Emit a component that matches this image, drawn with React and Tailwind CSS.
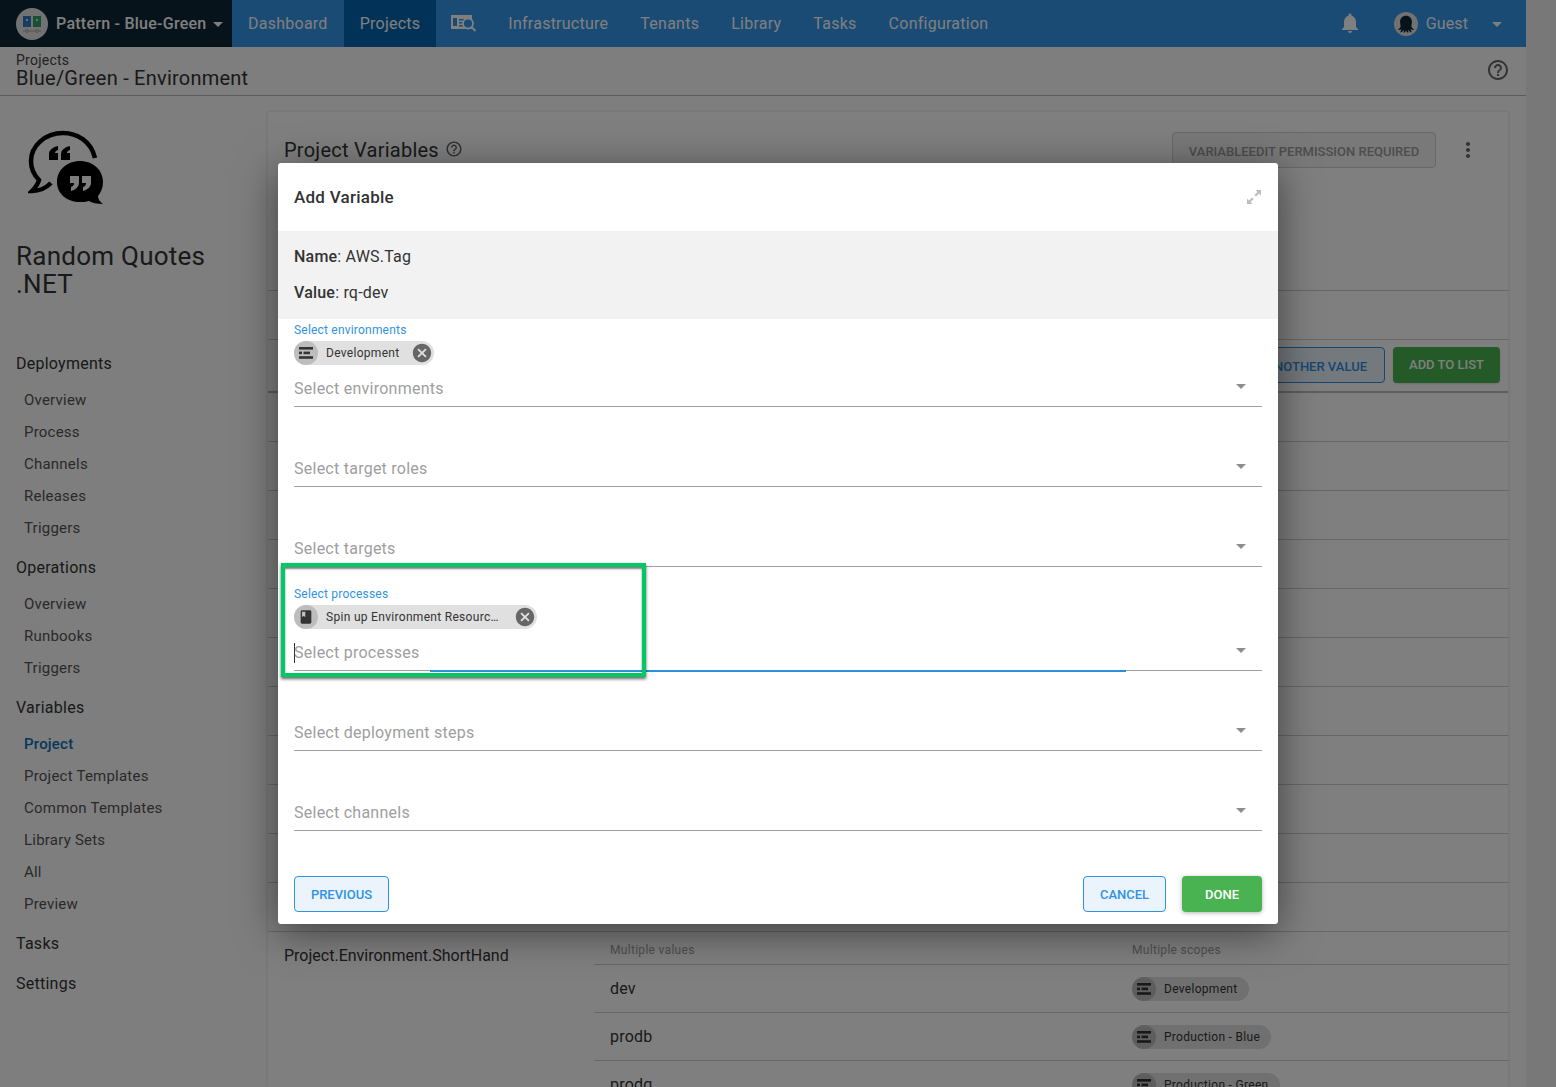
import React from "react";
import { MdArrowDropDown, MdNotifications, MdHelpOutline, MdMoreVert, MdCancel, MdBook } from "react-icons/md";

const F = { fontFamily: "Roboto, 'Liberation Sans', sans-serif" };

function EnvIcon({ className = "w-[14px] h-[12px] text-[#333]" }) {
  return (
    <svg viewBox="0 0 14 12" className={className} fill="currentColor">
      <rect x="0" y="0" width="14" height="2.6" />
      <rect x="0" y="4.6" width="3" height="2.6" />
      <rect x="4.5" y="4.6" width="6.5" height="2.6" />
      <rect x="0" y="9.2" width="14" height="2.6" />
    </svg>
  );
}

function Avatar({ children, bg = "bg-[#bdbdbd]" }) {
  return <span className={`w-6 h-6 rounded-full ${bg} flex items-center justify-center shrink-0`}>{children}</span>;
}

function Field({ h, label, chip, chipTextClass = "", placeholder, chipIcon, focus }) {
  return (
    <div className={`${h} px-4 flex flex-col justify-end`}>
      {label && <div className="text-xs leading-[14px] text-[#2f93e0] tracking-[0.2px]">{label}</div>}
      {chip && (
        <div className="mt-1 self-start h-6 pr-px rounded-full bg-[#e0e0e0] flex items-center">
          <Avatar>{chipIcon}</Avatar>
          <span className={`ml-2 text-xs tracking-[0.3px] text-[#333] whitespace-nowrap ${chipTextClass}`}>{chip}</span>
          <MdCancel className="ml-[11px] w-[22px] h-[22px] text-[#666]" />
        </div>
      )}
      <div className="relative h-9 mt-[6px] border-b border-[#9e9e9e] flex items-center justify-between">
        {focus && <span className="absolute left-0 top-2 w-px h-5 bg-[#333]" />}
        <span className="flex-1 text-base tracking-[0.25px] text-[#9e9e9e]">{placeholder}</span>
        <MdArrowDropDown className="w-6 h-6 text-[#8e8e8e] mr-[9px] -mt-1.5" />
        {focus && <span className="absolute left-[136px] top-[35px] w-[696px] h-0.5 bg-[#2f8fdf]" />}
      </div>
    </div>
  );
}

const NavLink = ({ children, active }) => (
  <div className={`h-full px-4 flex items-center text-base tracking-[0.25px] ${active ? "bg-[#0565b1]" : ""}`}>{children}</div>
);

const SideHead = ({ children, className = "" }) => (
  <div className={`h-10 flex items-center pl-4 text-base text-[#333] tracking-[0.25px] ${className}`}>{children}</div>
);
const SideItem = ({ children, active }) => (
  <div className={`h-8 flex items-center pl-6 text-[15px] tracking-[0.22px] ${active ? "text-[#0f6cb8] font-medium" : "text-[#555]"}`}>{children}</div>
);

function ScopeChip({ label }) {
  return (
    <div className="inline-flex h-6 rounded-full bg-[#e0e0e0] items-center pr-[11px]">
      <Avatar><EnvIcon /></Avatar>
      <span className="ml-2 text-xs tracking-[0.3px] text-[#333]">{label}</span>
    </div>
  );
}

function ValueRow({ value, scope }) {
  return (
    <div className="h-12 border-b border-[#cfcfcf] flex items-center">
      <div className="w-[538px] pl-4 text-base tracking-[0.2px] text-[#333]">{value}</div>
      <ScopeChip label={scope} />
    </div>
  );
}

function Logo() {
  return (
    <svg viewBox="0 0 78 76" className="w-[78px] h-[76px] text-black" fill="none">
      <path d="M67 28C63 11 49 3 35 3 17 3 3 16 3 31c0 8 3 14 8 19-1 4-4 8-7 11 7 0 14-3 19-8" stroke="currentColor" strokeWidth="4.5" />
      <path d="M21 30v-6c0-4 4-7 9-8v4c-2 .5-3 2-3 3h3v7zM33 30v-6c0-4 4-7 9-8v4c-2 .5-3 2-3 3h3v7z" fill="currentColor" />
      <path d="M29 52c0-12 10-21 23-21s23 9 23 21c0 6-2 10-5 14 0 3 2 6 5 8-6 0-11-1-14-3-3 1-6 1-9 1-13 0-23-8-23-20z" fill="currentColor" />
      <path d="M42 46h9v7c0 4-4 7-8 8v-4c2-.5 3-2 3-4h-4zM54 46h9v7c0 4-4 7-8 8v-4c2-.5 3-2 3-4h-4z" className="fill-[#fcfcfc]" />
    </svg>
  );
}

export default function App() {
  const rows = [0, 1, 2, 3, 4, 5, 6, 7, 8, 9, 10];
  return (
    <div className="relative w-[1556px] h-[1087px] overflow-hidden bg-[#f0f0f0]" style={F}>
      <div className="w-[1526px] h-full bg-[#fcfcfc] flex flex-col">
        {/* top nav */}
        <header className="h-[47px] bg-[#3396ea] flex items-center text-white shrink-0">
          <div className="w-[232px] h-full bg-[#0e2637] flex items-center pl-4 shrink-0">
            <span className="w-8 h-8 rounded-full bg-[#e4e4e4] flex items-center justify-center">
              <svg viewBox="0 0 24 24" className="w-6 h-6">
                <rect x="3" y="4" width="8" height="11" fill="#2e7dc4" />
                <rect x="13" y="4" width="8" height="11" fill="#2fa068" />
                <rect x="6" y="7" width="2" height="2" fill="#cfe3f5" />
                <rect x="16" y="7" width="2" height="2" fill="#cfe9dc" />
                <path d="M3 19h18" stroke="#aaa" strokeWidth="1" />
                <circle cx="7" cy="19" r="1.4" fill="#e4e4e4" stroke="#aaa" />
                <circle cx="17" cy="19" r="1.4" fill="#e4e4e4" stroke="#aaa" />
              </svg>
            </span>
            <span className="ml-2 text-base font-medium tracking-[0.25px] whitespace-nowrap">Pattern - Blue-Green</span>
            <MdArrowDropDown className="w-6 h-6" />
          </div>
          <NavLink>Dashboard</NavLink>
          <NavLink active>Projects</NavLink>
          <div className="w-[56px] h-full flex items-center justify-center">
            <svg viewBox="0 0 26 17" className="w-[26px] h-[17px]" fill="white">
              <rect x="0" y="0" width="21" height="14" />
              <rect x="2" y="3" width="4" height="8" fill="#3396ea" />
              <path d="M8 4h5v1.400H8zM8 7h4v1.400H8zM8 10h4v1.400H8z" fill="#3396ea" />
              <circle cx="17" cy="8.500" r="5" fill="#3396ea" stroke="white" strokeWidth="1.800" />
              <path d="M20.500 12l4 4" stroke="white" strokeWidth="2" />
            </svg>
          </div>
          <NavLink>Infrastructure</NavLink>
          <NavLink>Tenants</NavLink>
          <NavLink>Library</NavLink>
          <NavLink>Tasks</NavLink>
          <NavLink>Configuration</NavLink>
          <div className="flex-1" />
          <MdNotifications className="w-6 h-6 -mt-0.5" />
          <span className="ml-[32px] w-6 h-6 rounded-full bg-[#e4e4e4] flex items-center justify-center">
            <svg viewBox="0 0 24 24" className="w-[22px] h-[22px] text-[#0e2637]" fill="currentColor">
              <path d="M12 3c-4 0-6.500 3-6.500 6.500 0 2.500.8 4 .5 5.500-.4 1.800-2 2.500-3 3 1.500.8 3 .3 4-.6-.2 1.600-.8 2.800-1.500 3.600 2 .2 3.200-1.200 3.800-2.800.3 1.300.4 2.300 0 3.300 1.800-.2 2.500-1.600 2.700-3 .2 1.400.9 2.800 2.700 3-.4-1-.3-2 0-3.300.6 1.600 1.800 3 3.800 2.800-.7-.8-1.300-2-1.500-3.600 1 .9 2.500 1.400 4 .6-1-.5-2.600-1.200-3-3-.3-1.500.5-3 .5-5.500C18.500 6 16 3 12 3z" />
            </svg>
          </span>
          <span className="ml-2 text-base tracking-[0.1px]">Guest</span>
          <MdArrowDropDown className="w-6 h-6 ml-[17px] mr-[17px]" />
        </header>

        {/* breadcrumb */}
        <div className="h-[49px] shrink-0 border-b border-[#b8b8b8] px-4 pt-[6px] flex justify-between">
          <div>
            <div className="text-sm leading-[14px] tracking-[0.25px] text-[#444]">Projects</div>
            <div className="text-xl leading-[22px] tracking-[0.23px] text-[#333]">Blue/Green - Environment</div>
          </div>
          <MdHelpOutline className="w-6 h-6 text-[#666] mt-[5px]" />
        </div>

        <div className="flex-1 flex min-h-0">
          {/* sidebar */}
          <aside className="w-[268px] shrink-0 flex flex-col">
            <div className="pl-7 pt-[34px]"><Logo /></div>
            <div className="pl-4 mt-[36px] text-[26px] leading-[28px] tracking-[0.25px] text-[#333]">Random Quotes<br />.NET</div>
            <SideHead className="mt-[46px]">Deployments</SideHead>
            <SideItem>Overview</SideItem>
            <SideItem>Process</SideItem>
            <SideItem>Channels</SideItem>
            <SideItem>Releases</SideItem>
            <SideItem>Triggers</SideItem>
            <SideHead className="mt-[4px]">Operations</SideHead>
            <SideItem>Overview</SideItem>
            <SideItem>Runbooks</SideItem>
            <SideItem>Triggers</SideItem>
            <SideHead className="mt-[4px]">Variables</SideHead>
            <SideItem active>Project</SideItem>
            <SideItem>Project Templates</SideItem>
            <SideItem>Common Templates</SideItem>
            <SideItem>Library Sets</SideItem>
            <SideItem>All</SideItem>
            <SideItem>Preview</SideItem>
            <SideHead className="mt-[4px]">Tasks</SideHead>
            <SideHead>Settings</SideHead>
          </aside>

          {/* card */}
          <main className="mt-4 w-[1240px] bg-white shadow-[0_0_3px_rgba(0,0,0,0.15)]">
            <div className="h-[179px] border-b border-[#cfcfcf] pl-4 pt-[20px] pr-[28px] flex items-start justify-between">
              <div className="flex items-center gap-1.5 mt-[6px]">
                <span className="text-xl leading-6 tracking-[0.25px] text-[#333]">Project Variables</span>
                <MdHelpOutline className="w-[18px] h-[18px] text-[#666] -mt-0.5" />
              </div>
              <div className="flex items-center gap-5">
                <div className="h-9 w-[264px] pt-1 rounded-sm border border-[#d0d0d0] bg-[#f2f2f2] flex items-center justify-center text-[13px] font-medium text-[#9a9a9a]">VARIABLEEDIT PERMISSION REQUIRED</div>
                <MdMoreVert className="w-6 h-6 text-[#666]" />
              </div>
            </div>
            <div className="h-[49px] border-b border-[#cfcfcf]" />
            <div className="h-[53px] border-b-2 border-[#bdbdbd] flex items-start justify-end pt-[7px] pr-2 gap-2">
              <div className="h-9 w-[120px] pt-1 rounded-sm border border-[#2f8fdf] bg-[#e8f3fc] flex items-center justify-end pr-[17px] text-[13px] font-medium text-[#2f8fdf] whitespace-nowrap">ANOTHER VALUE</div>
              <div className="h-9 w-[107px] rounded-sm bg-[#48b350] flex items-center justify-center text-[13px] font-medium text-white shadow-sm">ADD TO LIST</div>
            </div>
            {rows.map((i) => (
              <div key={i} className="h-[49px] border-b border-[#cfcfcf]" />
            ))}
            <div className="flex">
              <div className="w-[326px] pl-4 pt-[12px] text-base text-[#333]">Project.Environment.ShortHand</div>
              <div className="flex-1">
                <div className="h-[33px] pt-[3px] border-b border-[#cfcfcf] flex items-center text-xs tracking-[0.3px] text-[#9e9e9e]">
                  <div className="w-[538px] pl-4">Multiple values</div>
                  <div>Multiple scopes</div>
                </div>
                <ValueRow value="dev" scope="Development" />
                <ValueRow value="prodb" scope="Production - Blue" />
                <ValueRow value="prodg" scope="Production - Green" />
              </div>
            </div>
          </main>
        </div>
      </div>

      {/* dim overlay */}
      <div className="absolute inset-0 bg-black/50" />

      {/* modal */}
      <div className="absolute left-[278px] top-[163px] w-[1000px] h-[761px] bg-white rounded-[3px] shadow-[0_8px_40px_rgba(0,0,0,0.5)] flex flex-col">
        <div className="h-[68px] shrink-0 px-4 pt-0.5 flex items-center justify-between">
          <span className="text-[17px] font-medium tracking-[0.25px] text-[#333]">Add Variable</span>
          <svg viewBox="0 0 14 14" className="w-[14px] h-[14px] text-[#bdbdbd] -mt-0.5 mr-px" fill="currentColor">
            <path d="M14 0v5.500l-2-2-3 3-1.500-1.500 3-3-2-2zM0 14V8.500l2 2 3-3L6.500 9l-3 3 2 2z" />
          </svg>
        </div>
        <div className="h-[88px] shrink-0 bg-[#f2f2f2] px-4 pt-4 text-base leading-5 text-[#333] tracking-[0.2px]">
          <div><span className="font-medium">Name</span>: AWS.Tag</div>
          <div className="mt-4"><span className="font-medium">Value</span>: rq-dev</div>
        </div>
        <Field h="h-[88px]" label="Select environments" chip="Development" chipIcon={<EnvIcon />} placeholder="Select environments" />
        <Field h="h-[80px]" placeholder="Select target roles" />
        <Field h="h-[80px]" placeholder="Select targets" />
        <Field h="h-[104px]" label="Select processes" chip="Spin up Environment Resourc…" chipTextClass="w-[177px]" chipIcon={<MdBook className="w-4 h-4 text-[#333]" />} placeholder="Select processes" focus />
        <Field h="h-[80px]" placeholder="Select deployment steps" />
        <Field h="h-[80px]" placeholder="Select channels" />
        <div className="flex-1 px-4 pt-[45px] flex items-start">
          <div className="h-9 w-[95px] pt-0.5 rounded-sm border border-[#2f93e0] bg-[#ebf4fd] flex items-center justify-center text-[13px] font-medium text-[#2f93e0]">PREVIOUS</div>
          <div className="flex-1" />
          <div className="h-9 w-[83px] pt-0.5 rounded-sm border border-[#2f93e0] bg-[#ebf4fd] flex items-center justify-center text-[13px] font-medium text-[#2f93e0]">CANCEL</div>
          <div className="ml-4 h-9 w-20 pt-0.5 rounded-sm bg-[#48b350] flex items-center justify-center text-[13px] font-medium text-white shadow-[0_1px_4px_rgba(0,0,0,0.3)]">DONE</div>
        </div>
      </div>

      {/* highlight annotation */}
      <div className="absolute left-[281px] top-[563px] w-[365px] h-[114px] border-4 border-[#00c864] shadow-[0_2px_3px_rgba(0,0,0,0.6),inset_0_2px_2px_rgba(0,0,0,0.5)]" />
    </div>
  );
}
